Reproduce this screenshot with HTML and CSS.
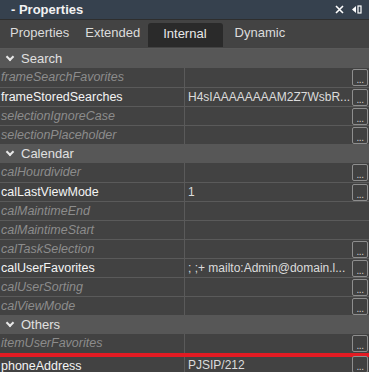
FILE: index.html
```html
<!DOCTYPE html>
<html lang="en">
<head>
  <meta charset="UTF-8" />
  <title>Properties</title>
  <link rel="stylesheet" href="styles.css">
</head>
<body>
  <div class="panel">
    <header class="titlebar">
      <div class="title">- Properties</div>
      <div class="title-icons">
        <svg width="9" height="9" viewBox="0 0 9 9"><path d="M1 1L8 8M8 1L1 8" stroke="#fff" stroke-width="1.6"/></svg>
        <svg width="11" height="9" viewBox="0 0 11 9"><path d="M0 4.5L4 1V8Z" fill="#fff"/><rect x="6" y="1" width="3" height="7" fill="none" stroke="#fff" stroke-width="1.2"/></svg>
      </div>
    </header>

    <nav class="tabs">
      <div class="tab">Properties</div>
      <div class="tab">Extended</div>
      <div class="tab active">Internal</div>
      <div class="tab">Dynamic</div>
    </nav>

    <div class="grid">
      <div class="group"><span class="chev"></span>Search</div>
      <div class="row"><div class="name dim">frameSearchFavorites</div><div class="value"><span></span><button>...</button></div></div>
      <div class="row"><div class="name">frameStoredSearches</div><div class="value"><span>H4sIAAAAAAAAM2Z7WsbR...</span><button>...</button></div></div>
      <div class="row"><div class="name dim">selectionIgnoreCase</div><div class="value"><span></span><button>...</button></div></div>
      <div class="row"><div class="name dim">selectionPlaceholder</div><div class="value"><span></span><button>...</button></div></div>

      <div class="group"><span class="chev"></span>Calendar</div>
      <div class="row"><div class="name dim">calHourdivider</div><div class="value"><span></span><button>...</button></div></div>
      <div class="row"><div class="name">calLastViewMode</div><div class="value"><span>1</span><button>...</button></div></div>
      <div class="row"><div class="name dim">calMaintimeEnd</div><div class="value"><span></span></div></div>
      <div class="row"><div class="name dim">calMaintimeStart</div><div class="value"><span></span></div></div>
      <div class="row"><div class="name dim">calTaskSelection</div><div class="value"><span></span><button>...</button></div></div>
      <div class="row"><div class="name">calUserFavorites</div><div class="value"><span>; ;+ mailto:Admin@domain.l...</span><button>...</button></div></div>
      <div class="row"><div class="name dim">calUserSorting</div><div class="value"><span></span><button>...</button></div></div>
      <div class="row"><div class="name dim">calViewMode</div><div class="value"><span></span><button>...</button></div></div>

      <div class="group"><span class="chev"></span>Others</div>
      <div class="row"><div class="name dim">itemUserFavorites</div><div class="value"><span></span><button>...</button></div></div>
      <div class="row marked"><div class="name">phoneAddress</div><div class="value"><span>PJSIP/212</span><button>...</button></div></div>
    </div>
  </div>
</body>
</html>
```

FILE: styles.css
```css
* {
  margin: 0;
  padding: 0;
  box-sizing: border-box;
}

body {
  background: #404040;
  font-family: "Liberation Sans", Arial, sans-serif;
  font-size: 13px;
  color: #e6e6e6;
  overflow: hidden;
  height: 372px;
}

.panel {
  width: 369px;
}

.titlebar {
  height: 19px;
  background: #36414e;
  display: flex;
  align-items: center;
  justify-content: space-between;
  padding: 0 6px 0 11px;
}

.title {
  font-weight: bold;
  color: #f2f2f2;
  font-size: 13px;
}

.title-icons {
  display: flex;
  align-items: center;
  gap: 8px;
}

.title-icons svg {
  display: block;
}

.tabs {
  height: 29px;
  background: #434343;
  border-top: 1px solid #2e2e2e;
  display: flex;
  align-items: flex-end;
}

.tab {
  height: 24px;
  line-height: 22px;
  padding: 0 8px;
  color: #dcdcdc;
  margin-bottom: 2px;
}

.tab:first-child {
  padding-left: 10px;
}

.tab.active {
  background: #2a2a2a;
  color: #e8e8e8;
  border-radius: 3px 3px 0 0;
  padding: 0 16px 0 15px;
  margin-bottom: 1px;
}

.tab:last-child {
  padding-left: 12px;
}

.grid {
  border-top: 1px solid #5a5a5a;
  font-size: 12.5px;
}

.group {
  height: 19px;
  background: #575757;
  display: flex;
  align-items: center;
  color: #e0e0e0;
  padding-left: 6px;
  font-size: 13px;
}

.chev {
  width: 6px;
  height: 6px;
  border-right: 2px solid #e8e8e8;
  border-bottom: 2px solid #e8e8e8;
  transform: rotate(45deg);
  margin: -3px 8px 0 1px;
}

.row {
  display: flex;
  height: 19px;
  border-top: 1px solid #5a5a5a;
  background: #424242;
}

.group + .row {
  border-top: none;
}

.name {
  width: 185px;
  flex: none;
  border-right: 1px solid #5a5a5a;
  padding-left: 1px;
  line-height: 18px;
  color: #f4f4f4;
  white-space: nowrap;
  overflow: hidden;
}

.name.dim {
  color: #8c8c8c;
  font-style: italic;
}

.value {
  flex: 1;
  min-width: 0;
  display: flex;
  align-items: center;
  padding-left: 3px;
  line-height: 18px;
  color: #dcdcdc;
  font-size: 12px;
}

.value span {
  flex: 1;
  min-width: 0;
  white-space: nowrap;
  overflow: hidden;
}

.value button {
  flex: none;
  width: 16px;
  height: 17px;
  margin-right: 1px;
  background: #404040;
  border: 1px solid #8e8e8e;
  border-radius: 2px;
  color: #d0d0d0;
  font-family: "Liberation Sans", Arial, sans-serif;
  font-size: 10px;
  line-height: 20px;
  text-align: center;
  padding: 0;
  letter-spacing: -0.5px;
}

.row.marked {
  border-top: 4px solid #e31b23;
  border-bottom: 3px solid #e31b23;
  height: 22px;
}
```
